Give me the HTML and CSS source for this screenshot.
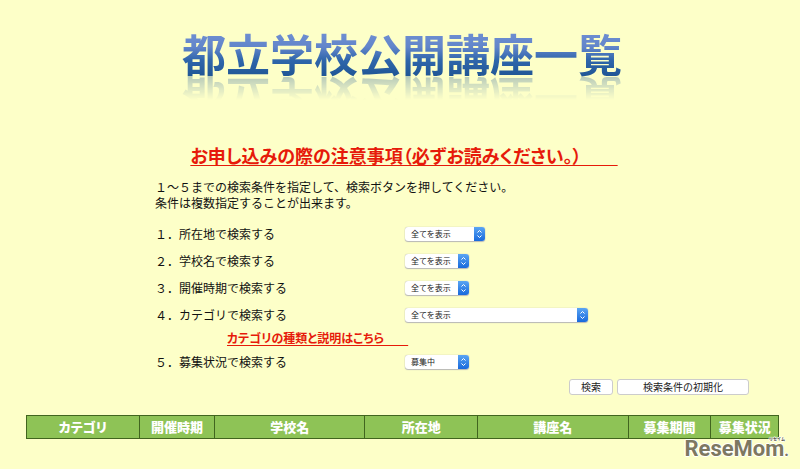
FILE: index.html
```html
<!DOCTYPE html>
<html lang="ja">
<head>
<meta charset="utf-8">
<meta name="viewport" content="width=device-width, initial-scale=1">
<title>都立学校公開講座一覧</title>
<link rel="stylesheet" href="styles.css">
</head>
<body>
<header class="banner"><h1 class="title">都立学校公開講座一覧</h1></header>
<main>
<p class="notice"><a href="#">お申し込みの際の注意事項（必ずお読みください。）　　</a></p>
<form class="search">
<p class="lead">１～５までの検索条件を指定して、検索ボタンを押してください。<br>条件は複数指定することが出来ます。</p>
<div class="row">
<label for="area">１．所在地で検索する</label>
<span class="picker medium"><select id="area"><option>全てを表示</option></select><svg viewBox="0 0 11 14" aria-hidden="true"><path d="M3.5 5.5 5.5 3.5 7.5 5.5M3.5 8.5 5.5 10.5 7.5 8.5"/></svg></span>
</div>
<div class="row">
<label for="school">２．学校名で検索する</label>
<span class="picker"><select id="school"><option>全てを表示</option></select><svg viewBox="0 0 11 14" aria-hidden="true"><path d="M3.5 5.5 5.5 3.5 7.5 5.5M3.5 8.5 5.5 10.5 7.5 8.5"/></svg></span>
</div>
<div class="row">
<label for="period">３．開催時期で検索する</label>
<span class="picker"><select id="period"><option>全てを表示</option></select><svg viewBox="0 0 11 14" aria-hidden="true"><path d="M3.5 5.5 5.5 3.5 7.5 5.5M3.5 8.5 5.5 10.5 7.5 8.5"/></svg></span>
</div>
<div class="row">
<label for="category">４．カテゴリで検索する</label>
<span class="picker wide"><select id="category"><option>全てを表示</option></select><svg viewBox="0 0 11 14" aria-hidden="true"><path d="M3.5 5.5 5.5 3.5 7.5 5.5M3.5 8.5 5.5 10.5 7.5 8.5"/></svg></span>
</div>
<p class="help"><a href="#">カテゴリの種類と説明はこちら　　</a></p>
<div class="row">
<label for="status">５．募集状況で検索する</label>
<span class="picker"><select id="status"><option>募集中</option></select><svg viewBox="0 0 11 14" aria-hidden="true"><path d="M3.5 5.5 5.5 3.5 7.5 5.5M3.5 8.5 5.5 10.5 7.5 8.5"/></svg></span>
</div>
<div class="actions">
<button type="submit">検索</button>
<button type="reset" class="reset">検索条件の初期化</button>
</div>
</form>
<div class="results">
<table>
<colgroup><col class="c-category"><col class="c-period"><col class="c-school"><col class="c-area"><col class="c-course"><col class="c-term"><col class="c-status"></colgroup>
<thead><tr><th>カテゴリ</th><th>開催時期</th><th>学校名</th><th>所在地</th><th>講座名</th><th>募集期間</th><th>募集状況</th></tr></thead>
</table>
<div class="logo"><span class="ruby">リセイム</span>ReseMom<span class="dot">.</span></div>
</div>
</main>
</body>
</html>
```
FILE: styles.css
```css
* { box-sizing: border-box; }
body {
  margin: 0;
  min-height: 100vh;
  background: #fdffc8;
  color: #111;
  font: 12px/16px "Noto Sans CJK JP", sans-serif;
}
p, h1 { margin: 0; }
.banner {
  display: flex;
  justify-content: center;
  padding: 23px 0 0 4px;
}
.title {
  font-size: 44px;
  line-height: 60px;
  font-weight: 700;
  color: transparent;
  background: linear-gradient(#6f8fd2 15%, #6285ca 40%, #2f66ab 62%, #1f5594 90%);
  background-clip: text;
  -webkit-background-clip: text;
  -webkit-box-reflect: below -13px linear-gradient(transparent 50%, rgba(0, 0, 0, .4));
}
.notice {
  margin: 60px 0 0 8px;
  text-align: center;
  font-size: 18px;
  line-height: 24px;
  font-weight: 700;
  font-feature-settings: "palt";
}
a {
  color: #e61a0a;
  white-space: pre;
  text-underline-offset: 2px;
  text-decoration-thickness: 1px;
}
.search { margin: 12px 51px 0 155px; }
.lead { margin-bottom: 9px; }
.row {
  display: grid;
  grid-template-columns: 250px 1fr;
  align-items: center;
  height: 27px;
}
.picker {
  display: grid;
  grid-template-columns: 1fr 11px;
  width: 64px;
  height: 14px;
  background: #fff;
  border-radius: 3px;
  box-shadow: 0 0 1px #999, 0 1px 1px #bbb;
  overflow: hidden;
}
.medium { width: 80px; }
.wide { width: 183px; }
.picker select {
  grid-area: 1 / 1 / 2 / 3;
  appearance: none;
  border: 0;
  padding: 0 12px 0 6px;
  background: transparent;
  color: #222;
  font: 8px/14px "Noto Sans CJK JP", sans-serif;
}
.picker svg {
  grid-area: 1 / 2;
  width: 11px;
  height: 14px;
  background: linear-gradient(#5aa5f3, #1869dc);
  fill: none;
  stroke: #fff;
  pointer-events: none;
}
.help {
  padding-left: 72px;
  line-height: 20px;
  font-weight: 700;
  font-feature-settings: "palt";
}
.actions {
  display: flex;
  justify-content: flex-end;
  gap: 4px;
  margin-top: 4px;
}
button {
  width: 44px;
  height: 16px;
  padding: 0;
  border: 1px solid #ccc;
  border-radius: 3px;
  background: #fff;
  color: #222;
  font: 10px/14px "Noto Sans CJK JP", sans-serif;
}
.reset { width: 132px; }
.results { position: relative; margin: 20px 21px 0 26px; }
table {
  width: 100%;
  table-layout: fixed;
  border-collapse: collapse;
}
th {
  height: 23px;
  padding: 0;
  border: 1px solid #41651f;
  background: #8ec356;
  color: #fff;
  font-size: 13px;
  line-height: 20px;
  font-weight: 900;
  font-feature-settings: "palt";
}
.c-category { width: 15%; }
.c-period { width: 10%; }
.c-school { width: 20%; }
.c-area { width: 15%; }
.c-course { width: 20%; }
.c-term { width: 11%; }
.c-status { width: 9%; }
.logo {
  position: absolute;
  right: -10px;
  top: 23px;
  color: #7d7860;
  font: 700 22px/22px Roboto, sans-serif;
  text-shadow: 1px 0 #fff, -1px 0 #fff, 0 1px #fff, 0 -1px #fff;
}
.ruby {
  position: absolute;
  right: 4px;
  top: -2px;
  font: 700 4px/6px "Noto Sans CJK JP", sans-serif;
  color: #4c4938;
}
.dot { font-size: 16px; }
```
